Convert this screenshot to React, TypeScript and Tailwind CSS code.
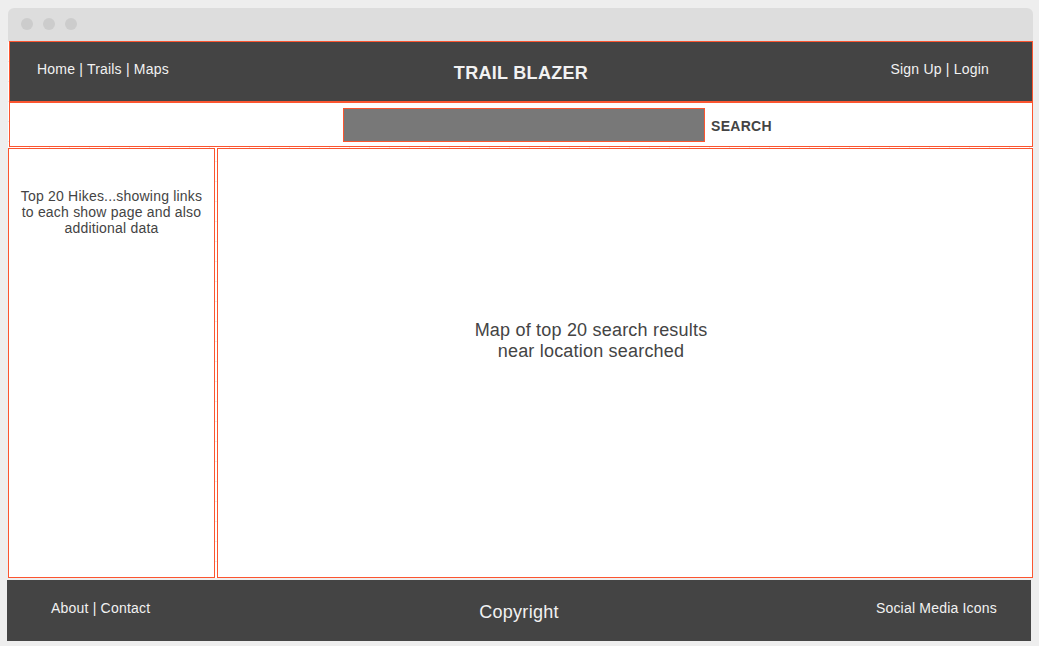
export default function App() {
  const font = { fontFamily: '"Liberation Sans", Arial, sans-serif' };
  return (
    <div className="w-[1039px] h-[646px] bg-[#eeeeee] pt-[8px] pl-[8px] overflow-hidden" style={font}>
      <div className="w-[1025px] rounded-t-[6px] bg-[#dddddd] h-[33px] flex items-start pt-[10px] gap-[10px] pl-[13px]">
        <span className="w-[12px] h-[12px] rounded-full bg-[#cccccc]" />
        <span className="w-[12px] h-[12px] rounded-full bg-[#cccccc]" />
        <span className="w-[12px] h-[12px] rounded-full bg-[#cccccc]" />
      </div>
      <div className="w-[1025px] bg-white bg-[linear-gradient(#ebebeb_1px,transparent_1px),linear-gradient(90deg,#ebebeb_1px,transparent_1px)] bg-[size:20px_20px] bg-[position:1px_0px] flex flex-col">
        <header className="ml-[1px] w-[1024px] h-[61px] bg-[#444444] border border-[#fb5530] grid grid-cols-[1fr_auto_1fr] text-[#f2f2f2]">
          <div className="pl-[27px] pt-[19px] text-[14px] leading-[16px] tracking-[0.2px]">Home | Trails | Maps</div>
          <div className="pt-[21px] text-[18px] leading-[21px] font-bold tracking-[0.3px]">TRAIL BLAZER</div>
          <div className="flex justify-end pr-[43px] pt-[19px] text-[14px] leading-[16px] tracking-[0.2px]">Sign Up | Login</div>
        </header>
        <div className="ml-[1px] w-[1024px] h-[45px] border border-[#fb5530] flex items-center pl-[333px] bg-white">
          <div className="w-[362px] h-[34px] bg-[#787878] border border-[#fb5530]" />
          <span className="ml-[6px] mt-[4px] text-[14px] font-bold text-[#444444] tracking-[0.3px]">SEARCH</span>
        </div>
        <div className="flex gap-[2px] mt-[1px] h-[430px]">
          <aside className="w-[207px] h-full border border-[#fb5530] bg-white pt-[39px] px-[10px] text-center text-[14px] leading-[16px] text-[#444444] tracking-[0.2px]">
            Top 20 Hikes...showing links to each show page and also additional data
          </aside>
          <main className="w-[816px] h-full border border-[#fb5530] bg-white flex items-center justify-center pr-[68px] text-center text-[18px] leading-[21px] text-[#444444] tracking-[0.2px]">
            <p className="-mt-[44px]">
              Map of top 20 search results
              <br />
              near location searched
            </p>
          </main>
        </div>
      </div>
      <footer className="-ml-[1px] mt-[2px] w-[1024px] h-[61px] bg-[#444444] grid grid-cols-[1fr_auto_1fr] text-[#f2f2f2]">
        <div className="pl-[44px] pt-[20px] text-[14px] leading-[16px] tracking-[0.2px]">About | Contact</div>
        <div className="pt-[22px] text-[18px] leading-[21px] tracking-[0.3px]">Copyright</div>
        <div className="flex justify-end pr-[34px] pt-[20px] text-[14px] leading-[16px] tracking-[0.2px]">Social Media Icons</div>
      </footer>
    </div>
  );
}
